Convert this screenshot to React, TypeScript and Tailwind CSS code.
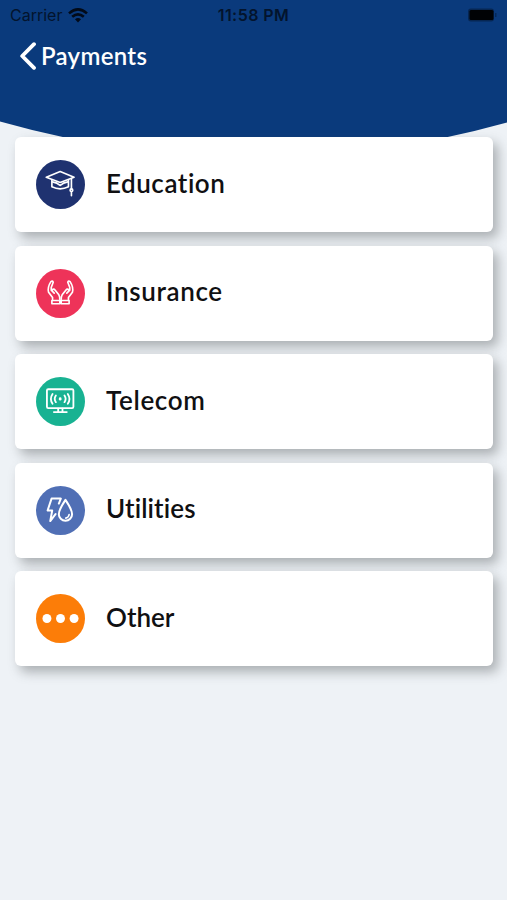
import type { ReactNode } from "react";

const stroke = {
  fill: "none",
  stroke: "white",
  strokeWidth: 6,
  strokeLinecap: "round" as const,
  strokeLinejoin: "round" as const,
};

function Badge({ color, children }: { color: string; children: ReactNode }) {
  return (
    <svg className="h-[49px] w-[49px] shrink-0" viewBox="32 31 148 148">
      <circle cx="106" cy="105" r="74" fill={color} />
      {children}
    </svg>
  );
}

const items = [
  {
    label: "Education",
    tracking: "tracking-[0.55px]",
    icon: (
      <Badge color="#1f3270">
        <g {...stroke} strokeWidth={5}>
          <path d="M63 83 L105 66 L147 83 L105 99 Z" />
          <path d="M80 92 V112 Q105 124 130 112 V92" />
          <path d="M82 97 Q96 99 105 108 Q114 99 128 97" />
          <path d="M139 88 V119 M139 126 V139" />
          <circle cx="139" cy="122" r="4" />
        </g>
      </Badge>
    ),
  },
  {
    label: "Insurance",
    tracking: "tracking-[0.65px]",
    icon: (
      <Badge color="#ee3359">
        <g {...stroke} strokeWidth={5}>
          <path d="M82 123 V117 L70 101 Q66 86 77 69 Q82 65 84 71 L78 87 V95 L87 104 M81 95 Q85 89 90 95 L101 109 Q104 114 104 123" />
          <path d="M130 123 V117 L142 101 Q146 86 135 69 Q130 65 128 71 L134 87 V95 L125 104 M131 95 Q127 89 122 95 L111 109 Q108 114 108 123" />
          <path d="M80 126 H104 V136 H80 Z M108 126 H132 V136 H108 Z" />
        </g>
      </Badge>
    ),
  },
  {
    label: "Telecom",
    tracking: "tracking-[0.65px]",
    icon: (
      <Badge color="#18b292">
        <g {...stroke} strokeWidth={5.5}>
          <rect x="65" y="68" width="80" height="57" rx="4" />
          <path d="M99 127 V135 M112 127 V135 M86 137 H125" />
          <path d="M82 82 Q72 97 82 112 M92 87 Q85 97 92 107 M128 82 Q138 97 128 112 M118 87 Q125 97 118 107" />
          <path d="M105 96 V98" strokeWidth={8} />
        </g>
      </Badge>
    ),
  },
  {
    label: "Utilities",
    tracking: "tracking-[0.1px]",
    icon: (
      <Badge color="#506fb5">
        <g {...stroke}>
          <path d="M101 84 L107 69 H79 L67 105 H81 L75 137 L91 116" />
          <path d="M121 73 Q101 103 101 116 A20 20 0 0 0 141 116 Q141 103 121 73 Z" />
          <path d="M132 117 Q131 126 122 128" strokeWidth={5} />
        </g>
      </Badge>
    ),
  },
  {
    label: "Other",
    tracking: "tracking-[0px]",
    icon: (
      <Badge color="#fc7d08">
        <g fill="white">
          <circle cx="65" cy="105" r="13.5" />
          <circle cx="106" cy="105" r="13.5" />
          <circle cx="147" cy="105" r="13.5" />
        </g>
      </Badge>
    ),
  },
];

export default function App() {
  return (
    <main className="relative isolate h-[900px] w-[507px] overflow-hidden bg-[#eef2f6] font-['Lato','Open_Sans',sans-serif]">
      <svg className="absolute inset-x-0 top-0 -z-10" width="507" height="160" viewBox="0 0 507 160">
        <path d="M0 0 H507 V122.5 Q253.5 193 0 121.5 Z" fill="#0a3a7c" />
      </svg>
      <header className="h-[137px]">
        <div className="grid h-[30px] grid-cols-[1fr_auto_1fr] items-center px-[10px] font-['Inter',sans-serif] text-[16px] leading-[30px] text-[#03142d]">
          <div className="flex items-center gap-[6px]">
            <span>Carrier</span>
            <svg width="20" height="15" viewBox="0 0 20 15" fill="none" stroke="#020a18" strokeWidth="2.6">
              <path d="M1 5.4 Q10 -2.6 19 5.4 M4.2 8.8 Q10 3.8 15.8 8.8" />
              <path d="M7 11.3 Q10 8.8 13 11.3 L10 14.4 Z" fill="#020a18" stroke="none" />
            </svg>
          </div>
          <span className="font-semibold tracking-[0.45px]">11:58 PM</span>
          <svg className="justify-self-end" width="30" height="14" viewBox="0 0 30 14">
            <rect x="1" y="0.5" width="26" height="13" rx="3" fill="#062653" />
            <rect x="2.5" y="2" width="24" height="10" rx="1.5" fill="#000205" />
            <rect x="28.2" y="5" width="1.2" height="4" fill="#062653" />
          </svg>
        </div>
        <div className="flex h-[51px] items-center gap-[4px] pl-[20px] text-white">
          <svg width="17" height="28" viewBox="0 0 17 28" fill="none" stroke="white" strokeWidth="3.8" strokeLinecap="round" strokeLinejoin="round">
            <path d="M14 2.2 L2.2 14 L14 25.8" />
          </svg>
          <h1 className="pt-px text-[24px] leading-[30px] font-semibold tracking-[0.3px]">Payments</h1>
        </div>
      </header>
      <ul className="flex flex-col gap-[13.5px] pr-[14px] pl-[15px]">
        {items.map((item) => (
          <li
            key={item.label}
            className="flex h-[95px] items-center gap-[21px] rounded-[6px] bg-white pl-[21px] shadow-[5px_6px_12px_rgba(70,74,78,0.4)]"
          >
            {item.icon}
            <span className={`pb-[4px] text-[26px] leading-[32px] font-semibold text-[#101012] ${item.tracking}`}>{item.label}</span>
          </li>
        ))}
      </ul>
    </main>
  );
}
